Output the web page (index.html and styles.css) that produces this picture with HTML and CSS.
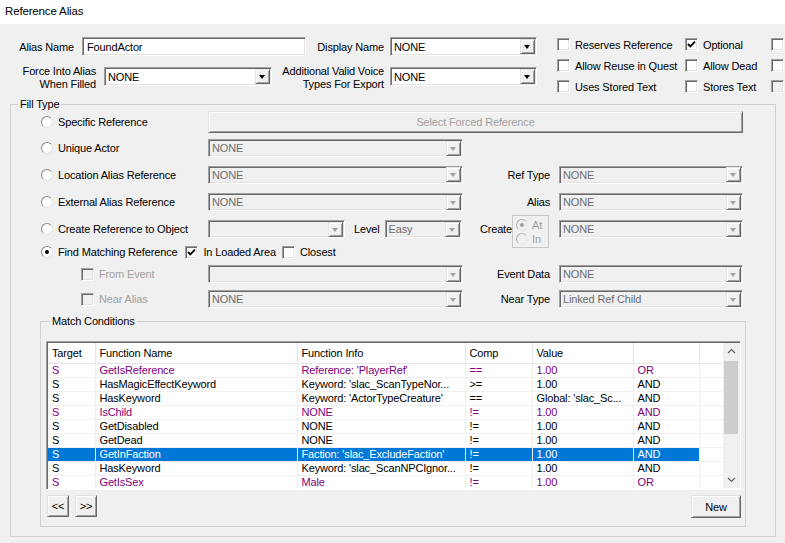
FILE: index.html
```html
<html>
  <head>
    <meta charset="utf-8">
    <link rel="stylesheet" href="styles.css">
  </head>
  <body>
    <div class="titlebar">Reference Alias</div>
    <div class="dialog">
      <div class="top">
        <div class="fields">
          <div class="frow">
            <label class="lbl w-alias">Alias Name</label>
            <div class="edit name">FoundActor</div>
            <label class="lbl w-disp">Display Name</label>
            <div class="combo c-top"><span>NONE</span><i class="arrow"></i></div>
          </div>
          <div class="frow second">
            <label class="lbl two w-force">Force Into Alias<br>When Filled</label>
            <div class="combo c-force"><span>NONE</span><i class="arrow"></i></div>
            <label class="lbl two w-voice">Additional Valid Voice<br>Types For Export</label>
            <div class="combo c-top"><span>NONE</span><i class="arrow"></i></div>
          </div>
        </div>
        <div class="flags">
          <div class="chk"><i class="box"></i>Reserves Reference</div>
          <div class="chk"><i class="box on"><svg viewBox="0 0 11 11"><path d="M2 5 L4.3 7.4 L9 2.6"/></svg></i>Optional</div>
          <div class="chk"><i class="box"></i></div>
          <div class="chk"><i class="box"></i>Allow Reuse in Quest</div>
          <div class="chk"><i class="box"></i>Allow Dead</div>
          <div class="chk"><i class="box"></i></div>
          <div class="chk"><i class="box"></i>Uses Stored Text</div>
          <div class="chk"><i class="box"></i>Stores Text</div>
          <div class="chk"><i class="box off"></i></div>
        </div>
      </div>

      <fieldset class="group fill">
        <legend>Fill Type</legend>
        <div class="fillgrid">
          <div class="opt"><i class="radio"></i>Specific Reference</div>
          <div class="btn wide off">Select Forced Reference</div>

          <div class="opt"><i class="radio"></i>Unique Actor</div>
          <div class="combo dis"><span>NONE</span><i class="arrow"></i></div>
          <div></div><div></div>

          <div class="opt"><i class="radio"></i>Location Alias Reference</div>
          <div class="combo dis"><span>NONE</span><i class="arrow"></i></div>
          <label class="rlbl">Ref Type</label>
          <div class="combo dis"><span>NONE</span><i class="arrow"></i></div>

          <div class="opt"><i class="radio"></i>External Alias Reference</div>
          <div class="combo dis"><span>NONE</span><i class="arrow"></i></div>
          <label class="rlbl">Alias</label>
          <div class="combo dis"><span>NONE</span><i class="arrow"></i></div>

          <div class="opt"><i class="radio"></i>Create Reference to Object</div>
          <div class="level">
            <div class="combo dis c-obj"><span></span><i class="arrow"></i></div>
            <label class="lvl">Level</label>
            <div class="combo dis c-lvl"><span>Easy</span><i class="arrow"></i></div>
          </div>
          <div class="create">
            <label>Create</label>
            <div class="mini">
              <div class="opt off"><i class="radio on"></i>At</div>
              <div class="opt off"><i class="radio"></i>In</div>
            </div>
          </div>
          <div class="combo dis"><span>NONE</span><i class="arrow"></i></div>

          <div class="opt span2"><i class="radio on"></i>Find Matching Reference
            <i class="box on gap8"><svg viewBox="0 0 11 11"><path d="M2 5 L4.3 7.4 L9 2.6"/></svg></i>In Loaded Area
            <i class="box gap6"></i>Closest</div>
          <div></div><div></div>

          <div class="sub off"><i class="box off"></i>From Event</div>
          <div class="combo dis"><span></span><i class="arrow"></i></div>
          <label class="rlbl">Event Data</label>
          <div class="combo dis"><span>NONE</span><i class="arrow"></i></div>

          <div class="sub off"><i class="box off"></i>Near Alias</div>
          <div class="combo dis"><span>NONE</span><i class="arrow"></i></div>
          <label class="rlbl">Near Type</label>
          <div class="combo dis"><span>Linked Ref Child</span><i class="arrow"></i></div>
        </div>

        <fieldset class="group match">
          <legend>Match Conditions</legend>
          <div class="list">
            <div class="listbody">
              <table>
                <colgroup>
                  <col style="width: 47px"><col style="width: 202px"><col style="width: 168px">
                  <col style="width: 67px"><col style="width: 101px"><col style="width: 66px"><col style="width: 24px">
                </colgroup>
                <thead>
                  <tr><th>Target</th><th>Function Name</th><th>Function Info</th><th>Comp</th><th>Value</th><th></th><th class="last"></th></tr>
                </thead>
                <tbody>
                  <tr class="or"><td>S</td><td>GetIsReference</td><td>Reference: 'PlayerRef'</td><td>==</td><td>1.00</td><td>OR</td><td class="last"></td></tr>
                  <tr><td>S</td><td>HasMagicEffectKeyword</td><td>Keyword: 'slac_ScanTypeNor...</td><td>&gt;=</td><td>1.00</td><td>AND</td><td class="last"></td></tr>
                  <tr><td>S</td><td>HasKeyword</td><td>Keyword: 'ActorTypeCreature'</td><td>==</td><td>Global: 'slac_Sc...</td><td>AND</td><td class="last"></td></tr>
                  <tr class="or"><td>S</td><td>IsChild</td><td>NONE</td><td>!=</td><td>1.00</td><td>AND</td><td class="last"></td></tr>
                  <tr><td>S</td><td>GetDisabled</td><td>NONE</td><td>!=</td><td>1.00</td><td>AND</td><td class="last"></td></tr>
                  <tr><td>S</td><td>GetDead</td><td>NONE</td><td>!=</td><td>1.00</td><td>AND</td><td class="last"></td></tr>
                  <tr class="sel"><td>S</td><td>GetInFaction</td><td>Faction: 'slac_ExcludeFaction'</td><td>!=</td><td>1.00</td><td>AND</td><td class="last"></td></tr>
                  <tr><td>S</td><td>HasKeyword</td><td>Keyword: 'slac_ScanNPCIgnor...</td><td>!=</td><td>1.00</td><td>AND</td><td class="last"></td></tr>
                  <tr class="or"><td>S</td><td>GetIsSex</td><td>Male</td><td>!=</td><td>1.00</td><td>OR</td><td class="last"></td></tr>
                </tbody>
              </table>
            </div>
            <div class="vscroll">
              <svg class="chev" viewBox="0 0 17 17"><path d="M5 10 L8.5 6.5 L12 10"/></svg>
              <div class="track"><div class="thumb"></div></div>
              <svg class="chev" viewBox="0 0 17 17"><path d="M5 7 L8.5 10.5 L12 7"/></svg>
            </div>
          </div>
          <div class="actions">
            <div class="btn small">&lt;&lt;</div>
            <div class="btn small">&gt;&gt;</div>
            <div class="spacer"></div>
            <div class="btn new">New</div>
          </div>
        </fieldset>
      </fieldset>
    </div>
  </body>
</html>
```
FILE: styles.css
```css
body {
  margin: 0;
  width: 785px;
  height: 543px;
  overflow: hidden;
  background-color: #f0f0f0;
  font-family: "Liberation Sans", Arial, sans-serif;
  font-size: 11px;
  letter-spacing: -0.15px;
  color: #000;
}
.titlebar {
  height: 24px;
  line-height: 22px;
  padding-left: 5px;
  background-color: #fff;
  font-size: 11.5px;
}
.dialog {
  padding: 13px 0 0 10px;
}

/* top block */
.top {
  display: flex;
}
.fields {
  width: 527px;
}
.frow {
  display: flex;
  align-items: center;
  height: 19px;
}
.frow.second {
  margin-top: 11px;
}
.lbl {
  text-align: right;
  flex: none;
}
.lbl.two {
  line-height: 13px;
  margin-top: 2px;
}
.w-alias { width: 64px; margin-right: 8px; }
.w-disp { width: 78px; margin-right: 6px; }
.w-force { width: 86px; margin-right: 8px; }
.w-voice { width: 112px; margin-right: 6px; }

.edit, .combo {
  box-sizing: border-box;
  height: 19px;
  border: 1px solid;
  border-color: #a0a0a0 #fff #fff #a0a0a0;
  box-shadow: inset 1px 1px #696969, inset -1px -1px #e3e3e3;
  background-color: #fff;
  display: flex;
  align-items: center;
  flex: none;
}
.edit {
  padding-left: 4px;
}
.edit.name { width: 224px; }
.c-top { width: 147px; }
.c-force { width: 168px; }
.combo span {
  flex: 1;
  padding-left: 3px;
  white-space: nowrap;
  overflow: hidden;
}
.arrow {
  width: 15px;
  height: 15px;
  margin-right: 1px;
  box-sizing: border-box;
  background-color: #f0f0f0;
  border: 1px solid;
  border-color: #e3e3e3 #696969 #696969 #e3e3e3;
  box-shadow: inset 1px 1px #fff, inset -1px -1px #a0a0a0;
  position: relative;
}
.arrow:after {
  content: "";
  position: absolute;
  left: 3px;
  top: 5px;
  border-left: 3.5px solid transparent;
  border-right: 3.5px solid transparent;
  border-top: 4px solid #000;
}
.combo.dis {
  background-color: #f0f0f0;
  color: #6d6d6d;
  height: 18px;
}
.combo.dis .arrow:after {
  border-top-color: #a0a0a0;
}

/* check boxes and radios */
.flags {
  margin-left: 20px;
  margin-top: -3px;
  display: grid;
  grid-template-columns: 128px 86px 30px;
  grid-auto-rows: 21px;
  align-items: center;
  white-space: nowrap;
}
.chk {
  display: flex;
  align-items: center;
}
.box {
  width: 13px;
  height: 13px;
  box-sizing: border-box;
  border: 1px solid;
  border-color: #a0a0a0 #fff #fff #a0a0a0;
  box-shadow: inset 1px 1px #696969, inset -1px -1px #e3e3e3;
  background-color: #fff;
  margin-right: 5px;
  flex: none;
  display: inline-block;
}
.box svg {
  width: 11px;
  height: 11px;
  display: block;
}
.box svg path {
  fill: none;
  stroke: #000;
  stroke-width: 1.9;
}
.box.off {
  background-color: #f0f0f0;
}
.radio {
  width: 12px;
  height: 12px;
  box-sizing: border-box;
  border-radius: 50%;
  border: 1px solid;
  border-color: #8a8a8a #e3e3e3 #e3e3e3 #8a8a8a;
  background-color: #fff;
  margin-right: 5px;
  flex: none;
  position: relative;
}
.radio.on:after {
  content: "";
  position: absolute;
  left: 3px;
  top: 3px;
  width: 4px;
  height: 4px;
  border-radius: 50%;
  background-color: #000;
}

/* group boxes */
.group {
  margin: 0;
  border: 1px solid #d0d0d0;
}
.group legend {
  padding: 0 2px;
  line-height: 13px;
}
.fill {
  width: 766px;
  box-sizing: border-box;
  margin-top: 1px;
  padding: 0 0 9px 29px;
}
.fill > legend {
  margin-left: -22px;
}
.fillgrid {
  display: grid;
  margin-top: -3px;
  grid-template-columns: 168px 255px 96px 184px;
  grid-template-rows: 27px 26px 27px 28px 26px 20px 24px 26px;
  align-items: center;
  white-space: nowrap;
}
.opt {
  display: flex;
  align-items: center;
  padding-left: 1px;
}
.span2 {
  grid-column: 1 / 3;
}
.gap8 { margin-left: 8px; }
.gap6 { margin-left: 6px; }
.sub {
  display: flex;
  align-items: center;
  padding-left: 41px;
}
.off {
  color: #a0a0a0;
}
.rlbl {
  text-align: right;
  padding-right: 9px;
}
.level {
  display: flex;
  align-items: center;
}
.c-obj { width: 137px; }
.c-lvl { width: 77px; }
.lvl { margin: 0 5px 0 9px; }
.create {
  display: flex;
  align-items: center;
  justify-content: flex-end;
  padding-right: 10px;
  margin-top: 4px;
}
.create label {
  margin-top: -4px;
}
.mini {
  width: 37px;
  height: 33px;
  box-sizing: border-box;
  border: 1px solid #c8c8c8;
  padding: 2px 0 0 2px;
  line-height: 14px;
}
.mini .radio {
  margin-right: 4px;
  border-color: #b0b0b0 #e8e8e8 #e8e8e8 #b0b0b0;
  background-color: #f0f0f0;
}
.mini .radio.on:after {
  background-color: #a0a0a0;
}

/* buttons */
.btn {
  box-sizing: border-box;
  display: flex;
  align-items: center;
  justify-content: center;
  background-color: #f0f0f0;
  border: 1px solid;
  border-color: #e3e3e3 #696969 #696969 #e3e3e3;
  box-shadow: inset 1px 1px #fff, inset -1px -1px #a0a0a0;
}
.btn.wide {
  grid-column: 2 / 5;
  height: 22px;
}
.btn.small {
  width: 22px;
  height: 22px;
  margin-right: 6px;
}
.btn.new {
  width: 50px;
  height: 23px;
}

/* match conditions */
.match {
  width: 706px;
  box-sizing: border-box;
  margin-top: 3px;
  padding: 13px 4px 8px 5px;
}
.match > legend {
  margin-left: 4px;
}
.list {
  display: flex;
  width: 695px;
  height: 149px;
  box-sizing: border-box;
  border: 1px solid;
  border-color: #a0a0a0 #fff #fff #a0a0a0;
  box-shadow: inset 1px 1px #696969;
  padding: 1px 0 0 1px;
  background-color: #fff;
}
.listbody {
  width: 675px;
  overflow: hidden;
}
table {
  table-layout: fixed;
  border-collapse: collapse;
  width: 675px;
  font: inherit;
  letter-spacing: inherit;
}
th {
  font-weight: normal;
  text-align: left;
  height: 20px;
  padding: 0 0 0 4px;
  border-right: 1px solid #e5e5e5;
  border-bottom: 1px solid #e5e5e5;
}
td {
  height: 13px;
  line-height: 13px;
  padding: 0 0 0 4px;
  border-right: 1px solid #f0f0f0;
  border-bottom: 1px solid #f0f0f0;
  white-space: nowrap;
  overflow: hidden;
}
td.last, th.last {
  border-right: none;
}
tr.or td {
  color: #800080;
}
tr.sel td {
  background-color: #0078d7;
  color: #fff;
}
tr.sel td.last {
  background-color: #fff;
}
.vscroll {
  width: 17px;
  display: flex;
  flex-direction: column;
  background-color: #f0f0f0;
  margin-bottom: 1px;
}
.chev {
  width: 17px;
  height: 17px;
  flex: none;
}
.chev path {
  fill: none;
  stroke: #606060;
  stroke-width: 1.2;
}
.track {
  flex: 1;
  padding: 1px 2px 0 1px;
}
.thumb {
  height: 73px;
  background-color: #cdcdcd;
}
.actions {
  display: flex;
  margin-top: 5px;
  padding-left: 1px;
}
.spacer {
  flex: 1;
}
```
